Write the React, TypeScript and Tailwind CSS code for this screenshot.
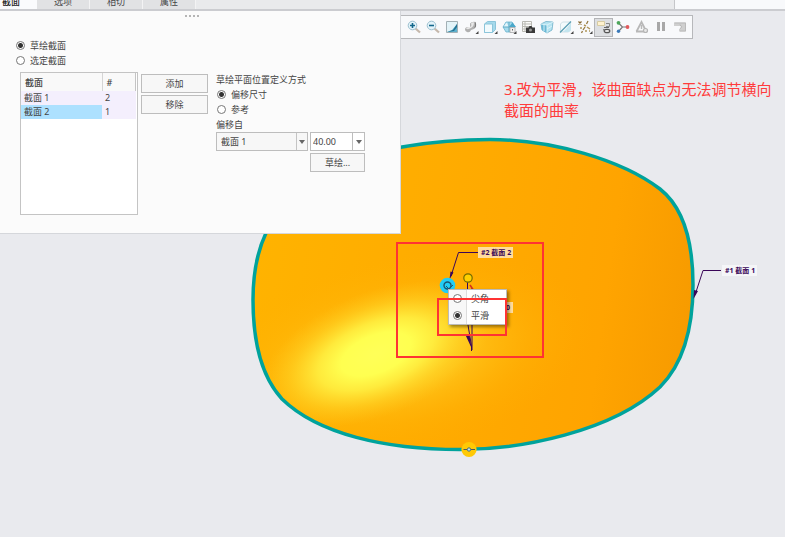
import type { ReactNode } from 'react';

const tabs = ['选项', '相切', '属性'];

const sections = [
    { name: '截面 1', count: 2, bg: 'bg-[#f4effd]' },
    { name: '截面 2', count: 1, bg: 'bg-[#ade1ff]' }
];

const tools = [
    {
        label: '放大',
        icon: (
            <>
                <path d="M9.5 9.5l4.5 4" stroke="#c5b8ac" strokeWidth="2.2" />
                <circle cx="6.5" cy="6.5" r="4.3" fill="#e3f3fa" stroke="#9dc0cf" />
                <path d="M4 6.5h5M6.5 4v5" stroke="#14688c" strokeWidth="1.6" />
            </>
        )
    },
    {
        label: '缩小',
        icon: (
            <>
                <path d="M9.5 9.5l4.5 4" stroke="#c5b8ac" strokeWidth="2.2" />
                <circle cx="6.5" cy="6.5" r="4.3" fill="#e3f3fa" stroke="#9dc0cf" />
                <path d="M4 6.5h5" stroke="#14688c" strokeWidth="1.6" />
            </>
        )
    },
    {
        label: '重新调整',
        icon: (
            <>
                <path d="M2.500 2.500h11v11h-11z" fill="#e3f3f8" stroke="#a3b0b5" />
                <path d="M13 5v8H3l5-2z" fill="#5fb2cf" />
                <path d="M3 13l6-2 4-6v3l-3 4z" fill="#23708f" />
            </>
        )
    },
    {
        label: '渲染选项',
        icon: (
            <>
                <path d="M2 10.500q0-2.500 3-2.500h2V4.500Q9 2 13 3v5q-2 3-5 3-1 3-4 2-2-1-2-2.500z" fill="#b0b0b0" />
                <path d="M3 9.500q1-2 4-1.500 2-.5 1-3.500 2-2 3-1 0 4-3 5.500-3 2-5 .5z" fill="#e8e8e8" />
                <path d="M12 3.500q1.500 0 1 4l-2 2q1.500-3 1-6z" fill="#7d7d7d" />
                <path d="M15.500 12v3h-3z" fill="#444" />
            </>
        )
    },
    {
        label: '显示样式',
        icon: (
            <>
                <path d="M2.500 5l3-2.500h8v8l-3 3h-8z" fill="#a5d9eb" stroke="#8cc5da" />
                <path d="M2.500 5h8v8.500h-8z" fill="#f1fafd" stroke="#8cc5da" />
                <path d="M15.500 12v3h-3z" fill="#444" />
            </>
        )
    },
    {
        label: '已保存方向',
        icon: (
            <>
                <path d="M2 8l3-5h6l3 5-3 5H5z" fill="#a6dbed" stroke="#69b3cd" strokeWidth=".8" />
                <path d="M2.500 8l3-4.500L8 8z" fill="#e3f5fb" />
                <path d="M2 8h7M8 3v10" stroke="#5faac4" />
                <path d="M8 8l3.500-4.500L15 8z" fill="#4aa8ca" />
                <path d="M9 8.500h5v5H9z" fill="#f2f2f2" stroke="#aaa" strokeWidth=".8" />
                <path d="M11 10h1v1.500h-1z" fill="#666" />
                <path d="M15.500 12v3h-3z" fill="#444" />
            </>
        )
    },
    {
        label: '视图管理器',
        icon: (
            <>
                <path d="M2.500 2.500h9v10h-9zM2.500 5h9M2.500 7.500h9M2.500 10h9M5 2.500v10" fill="#fcfcfa" stroke="#b9b9b3" />
                <path d="M6 8.500h2.500l1-1.500h2l1 1.500H15V14H6z" fill="#3a3a3a" />
                <circle cx="10.500" cy="11" r="1.500" fill="#999" />
            </>
        )
    },
    {
        label: '透视图',
        icon: (
            <>
                <path d="M2 5l5-2.500 7 .5-1 8-5 3-5-3z" fill="#b5e3f1" stroke="#6dafc8" strokeWidth=".8" />
                <path d="M2 5l6 1v8l-5-3z" fill="#69b9d6" />
                <path d="M2 5l6 1 6-3M8 6v8M8 10l5-3M5 5.500V12" stroke="#dff5fb" strokeWidth=".9" />
            </>
        )
    },
    {
        label: '注释显示',
        icon: (
            <>
                <path d="M2.500 5l2-2h8v8l-2 2h-8z" fill="#f3fafc" stroke="#cfe0e6" />
                <path d="M8 10l5-6v7l-2 2H5z" fill="#c4e5ef" />
                <path d="M2 13.500l11-11" stroke="#5a9db3" strokeWidth="1.200" />
                <path d="M15.500 12v3h-3z" fill="#444" />
            </>
        )
    },
    {
        label: '基准显示过滤器',
        icon: (
            <>
                <path d="M1.500 2.500l3 3M4.500 2.500l-3 3" stroke="#84662d" strokeWidth="1.200" />
                <path d="M11 2l-1.500 3M8 8l-2 3M5.500 12l-1 2" stroke="#967a42" strokeWidth="1.300" />
                <path d="M3 9h2M7 6l2 1M10 8l3 2M8 12h2M12 12h1" stroke="#b0965a" strokeWidth="1.500" />
                <path d="M15.500 12v3h-3z" fill="#444" />
            </>
        )
    },
    {
        label: '拖动器',
        active: true,
        icon: (
            <>
                <path d="M1.500 2.500h7v4h-7z" fill="#fff2cf" stroke="#d6cba2" />
                <path d="M10 4.500h3.500v3H10" stroke="#888" />
                <path d="M8 8.500h5" stroke="#666" />
                <ellipse cx="11" cy="12" rx="2.800" ry="1.700" fill="#eee" stroke="#555" strokeWidth="1.200" />
                <path d="M7 10.500l2 1" stroke="#666" />
            </>
        )
    },
    {
        label: '旋转中心',
        icon: (
            <>
                <path d="M3.500 4l4 4-4 4.500M7.500 8H13" stroke="#777" strokeWidth="1.200" />
                <circle cx="3.500" cy="3.800" r="1.900" fill="#4ca65a" />
                <circle cx="12.500" cy="8" r="1.900" fill="#e1595b" />
                <circle cx="3.500" cy="12.300" r="1.700" fill="#3979b9" />
            </>
        )
    },
    {
        label: '仿真',
        icon: (
            <>
                <path d="M2.500 12.500L7.500 3l4 8M2 12.500h8" stroke="#b8b8b8" strokeWidth="1.800" />
                <path d="M7.500 6v4" stroke="#b8b8b8" strokeWidth="1.400" />
                <circle cx="11.500" cy="11.500" r="2" fill="#e8e8e8" stroke="#b5b5b5" strokeWidth="1.200" />
            </>
        )
    },
    {
        label: '暂停',
        icon: <path d="M4 3h3v9H4zM9 3h3v9H9z" fill="#a8a8a8" />
    },
    {
        label: '恢复',
        icon: (
            <>
                <path d="M2 3.500h12v9H7V10h2V7H2z" fill="#cfcfcf" />
                <path d="M2.500 4h11v8H8" stroke="#bababa" />
                <path d="M8 5.500q3 2.500 0 4.500" stroke="#b5b5b5" />
            </>
        )
    }
];

const Radio = ({ name, children, checked }: { name: string; children: ReactNode; checked?: boolean }) => (
    <label className="flex items-center gap-[5px] h-[15px]">
        <input
            type="radio"
            name={name}
            defaultChecked={checked}
            className="appearance-none w-[9px] h-[9px] shrink-0 rounded-full border border-[#777] bg-white checked:bg-[radial-gradient(circle,#333_2px,transparent_3px)]"
        />
        {children}
    </label>
);

const PanelButton = ({ children }: { children: ReactNode }) => (
    <button className="h-[19px] w-full border border-[#bdbdbd] bg-[#f7f7f7] text-center">{children}</button>
);

const Arrow = () => (
    <svg viewBox="0 0 6 4" className="w-[6px] h-[4px]">
        <path d="M0 0h6L3 4z" fill="#666" />
    </svg>
);

const Model = () => (
    <svg viewBox="0 11 785 526" fill="none" className="absolute left-0 top-0 w-[785px] h-[526px]">
        <defs>
            <path
                id="outline"
                d="M490 139.500C552 139.500 622 160 660 189C684 208 693 243 693 285C693 330 683 364 660 387C612 432 520 449.500 460 449.500C385 449.500 318 434 282 399C260 375 253 337 253 300C253 275 257 252 266 233C283 190 335 160 402 147C430 142 460 139.500 490 139.500Z"
            />
            <linearGradient id="surface" x1="253" y1="250" x2="693" y2="310" gradientUnits="userSpaceOnUse">
                <stop offset="0" stopColor="#ffb300" />
                <stop offset=".5" stopColor="#ffaa00" />
                <stop offset=".8" stopColor="#ffa400" />
                <stop offset="1" stopColor="#f79b00" />
            </linearGradient>
            <radialGradient id="halo">
                <stop offset="0" stopColor="#ffd42a" />
                <stop offset=".35" stopColor="#ffcb20" stopOpacity=".75" />
                <stop offset=".7" stopColor="#ffb80b" stopOpacity=".3" />
                <stop offset="1" stopColor="#ffae00" stopOpacity="0" />
            </radialGradient>
            <radialGradient id="shine">
                <stop offset="0" stopColor="#ffff58" />
                <stop offset=".3" stopColor="#ffff50" />
                <stop offset=".5" stopColor="#fff445" stopOpacity=".8" />
                <stop offset=".75" stopColor="#ffe030" stopOpacity=".35" />
                <stop offset="1" stopColor="#ffce20" stopOpacity="0" />
            </radialGradient>
            <clipPath id="body">
                <use href="#outline" />
            </clipPath>
        </defs>
        <use href="#outline" fill="url(#surface)" />
        <g clipPath="url(#body)">
            <ellipse cx="395" cy="355" rx="200" ry="98" transform="rotate(-10 395 355)" fill="url(#halo)" />
            <ellipse cx="376" cy="354" rx="122" ry="62" transform="rotate(-22 376 354)" fill="url(#shine)" />
        </g>
        <use href="#outline" stroke="#00a39c" strokeWidth="3.500" />

        <g stroke="#3a0658">
            <path d="M478 252.500h-19.500L451 276" />
            <path d="M721 270.500h-18L695 295" />
            <path d="M467.500 282v40l4 24V351M472 288v62" />
        </g>
        <path d="M449.500 279.500l1-8 3 1zM693.500 299l.5-9 4 1zM465.500 335l4 0 2 13z" fill="#3a0658" />
        <path d="M470 285l4 6" stroke="#d5301d" strokeWidth="1.500" />

        <circle cx="447.500" cy="285.500" r="7.800" fill="#22cdf5" />
        <circle cx="447.500" cy="285.500" r="3.500" stroke="#1c5570" strokeWidth="1.400" />
        <path d="M446 286l3 3 4-4" stroke="#1c5570" />
        <circle cx="468" cy="278" r="4.200" fill="#ffd000" stroke="#736c00" strokeWidth="1.200" />
        <circle cx="469" cy="449.500" r="7.600" fill="#ffc905" />
        <path d="M463.500 449.500h11.500" stroke="#555" />
        <circle cx="469" cy="449.500" r="1.700" fill="#bfe3e5" stroke="#49717a" />
    </svg>
);

const noteStyle = 'absolute h-[11px] px-[3px] text-[7px] leading-[11px] font-bold whitespace-pre text-[#3a0658]';

const App = () => {
    return (
        <div className="min-h-screen flex flex-col overflow-hidden bg-[#e9eaee] text-[9px] leading-[15px] text-[#444] font-['Noto_Sans','Noto_Sans_CJK_SC',sans-serif]">
            <header className="flex h-[11px] items-stretch border-b-2 border-[#cbccd0] bg-[#e9eaec]">
                <nav className="flex items-end overflow-hidden">
                    <button className="w-[37px] h-[15px] pr-[17px] bg-[#fafbfd] text-right font-medium text-[#222]">截面</button>
                    {tabs.map((tab) => (
                        <button key={tab} className="w-[53px] h-[15px] border-r border-[#f3f3f4] bg-[#e1e2e4]">{tab}</button>
                    ))}
                </nav>
                <div className="ml-auto w-[111px] border-l border-[#c5c6c9] bg-[#f8f9fb]" />
            </header>

            <main className="relative flex flex-1 items-start">
                <Model />

                <section className="relative w-[401px] h-[223px] shrink-0 border-r border-b border-[#d5d7db] bg-[#fbfbfb]">
                    <div className="flex h-[27px] justify-center gap-[2px] pt-1 pr-4">
                        {[0, 1, 2, 3].map((dot) => (
                            <span key={dot} className="w-[2px] h-[2px] bg-[#b5b5b5]" />
                        ))}
                    </div>
                    <div className="pl-4">
                        <Radio name="kind" checked>草绘截面</Radio>
                        <Radio name="kind">选定截面</Radio>
                    </div>

                    <div className="flex items-start pl-5 pt-1">
                        <div className="w-[118px] h-[143px] border border-[#c4c4c4] bg-white">
                            <table className="w-[115px] table-fixed border-collapse text-left">
                                <thead>
                                    <tr className="h-[18px] bg-[#f9f9f9]">
                                        <th className="w-[81px] pl-1 font-medium border-r border-[#d5d5d5]">截面</th>
                                        <th className="pl-1 font-medium border-r border-[#c4c4c4]">#</th>
                                    </tr>
                                </thead>
                                <tbody>
                                    {sections.map((section) => (
                                        <tr key={section.name} className="h-[14px] leading-[14px]">
                                            <td className={`pl-[3px] ${section.bg}`}>{section.name}</td>
                                            <td className="pl-[3px] bg-[#f4effd]">{section.count}</td>
                                        </tr>
                                    ))}
                                </tbody>
                            </table>
                        </div>

                        <div className="flex w-[67px] flex-col gap-[2px] ml-[3px] pt-[2px]">
                            <PanelButton>添加</PanelButton>
                            <PanelButton>移除</PanelButton>
                        </div>

                        <div className="w-[149px] ml-2">
                            <p>草绘平面位置定义方式</p>
                            <div className="pl-px">
                                <Radio name="position" checked>偏移尺寸</Radio>
                                <Radio name="position">参考</Radio>
                            </div>
                            <label htmlFor="offset-from" className="block h-[15px]">偏移自</label>
                            <div className="flex justify-between">
                                <div className="relative w-[92px]">
                                    <select id="offset-from" className="block appearance-none w-full h-[19px] pl-1 border border-[#bdbdbd] bg-[#f7f7f7]">
                                        <option>截面 1</option>
                                        <option>截面 2</option>
                                    </select>
                                    <span className="absolute right-px inset-y-px flex w-[11px] items-center justify-center border-l border-[#c4c4c4] pointer-events-none">
                                        <Arrow />
                                    </span>
                                </div>
                                <div className="flex w-[55px] h-[19px] border border-[#bdbdbd] bg-white">
                                    <input aria-label="偏移值" defaultValue="40.00" className="min-w-0 flex-1 pl-[2px] outline-none" />
                                    <button aria-label="偏移值列表" className="flex w-[12px] items-center justify-center border-l border-[#bdbdbd]">
                                        <Arrow />
                                    </button>
                                </div>
                            </div>
                            <div className="w-[55px] ml-auto pt-[2px]">
                                <PanelButton>草绘...</PanelButton>
                            </div>
                        </div>
                    </div>
                </section>

                <div className="relative flex-1 min-w-0 pt-1">
                    <div className="flex w-[292px] h-6 items-center gap-[2px] pl-1 border border-l-0 border-[#b7b8bb] bg-[#f8f9fb]">
                        {tools.map((tool) => (
                            <button
                                key={tool.label}
                                aria-label={tool.label}
                                className={`flex w-[17px] h-[17px] shrink-0 items-center justify-center ${tool.active ? 'bg-[#dddfe2] outline outline-[#b3b4b7]' : ''}`}
                            >
                                <svg viewBox="0 0 16 16" fill="none" className="w-4 h-4">{tool.icon}</svg>
                            </button>
                        ))}
                    </div>
                    <p className="pt-10 pl-[103px] text-[15px] leading-[21px] text-[#ff3b3b]">
                        3.改为平滑，该曲面缺点为无法调节横向<br />截面的曲率
                    </p>
                </div>

                <span className={`${noteStyle} left-[478px] top-[236px] w-[35px] bg-[#ffdc9e]`}>#2 截面 2</span>
                <span className={`${noteStyle} left-[722px] top-[254px] w-[35px] bg-[#f5f6f8]`}>#1 截面 1</span>
                <span className={`${noteStyle} left-[500px] top-[291px] w-[13px] text-right bg-[#ffdc9e]`}>0</span>

                <div className="absolute left-[448px] top-[278px] w-[59px] h-[36px] border border-[#bbb] bg-[linear-gradient(to_right,#f8f8f8_17px,#ddd_17px,#ddd_18px,white_18px)] pl-1 shadow-[2px_2px_3px_#0006]">
                    <label className="flex h-[17px] items-center gap-[9px]">
                        <input type="radio" name="corner" className="appearance-none w-[9px] h-[9px] rounded-full border border-[#777] bg-white" />
                        尖角
                    </label>
                    <label className="flex h-[17px] items-center gap-[9px]">
                        <input type="radio" name="corner" defaultChecked className="appearance-none w-[9px] h-[9px] rounded-full border border-[#777] bg-white checked:bg-[radial-gradient(circle,#333_2px,transparent_3px)]" />
                        平滑
                    </label>
                </div>

                {/* red markup boxes */}
                <div className="absolute left-[396px] top-[231px] w-[148px] h-[116px] border-2 border-[#ff3333] pointer-events-none" />
                <div className="absolute left-[437px] top-[287px] w-[70px] h-[38px] border-2 border-[#ff3333] pointer-events-none" />
            </main>
        </div>
    );
};

export default App;
